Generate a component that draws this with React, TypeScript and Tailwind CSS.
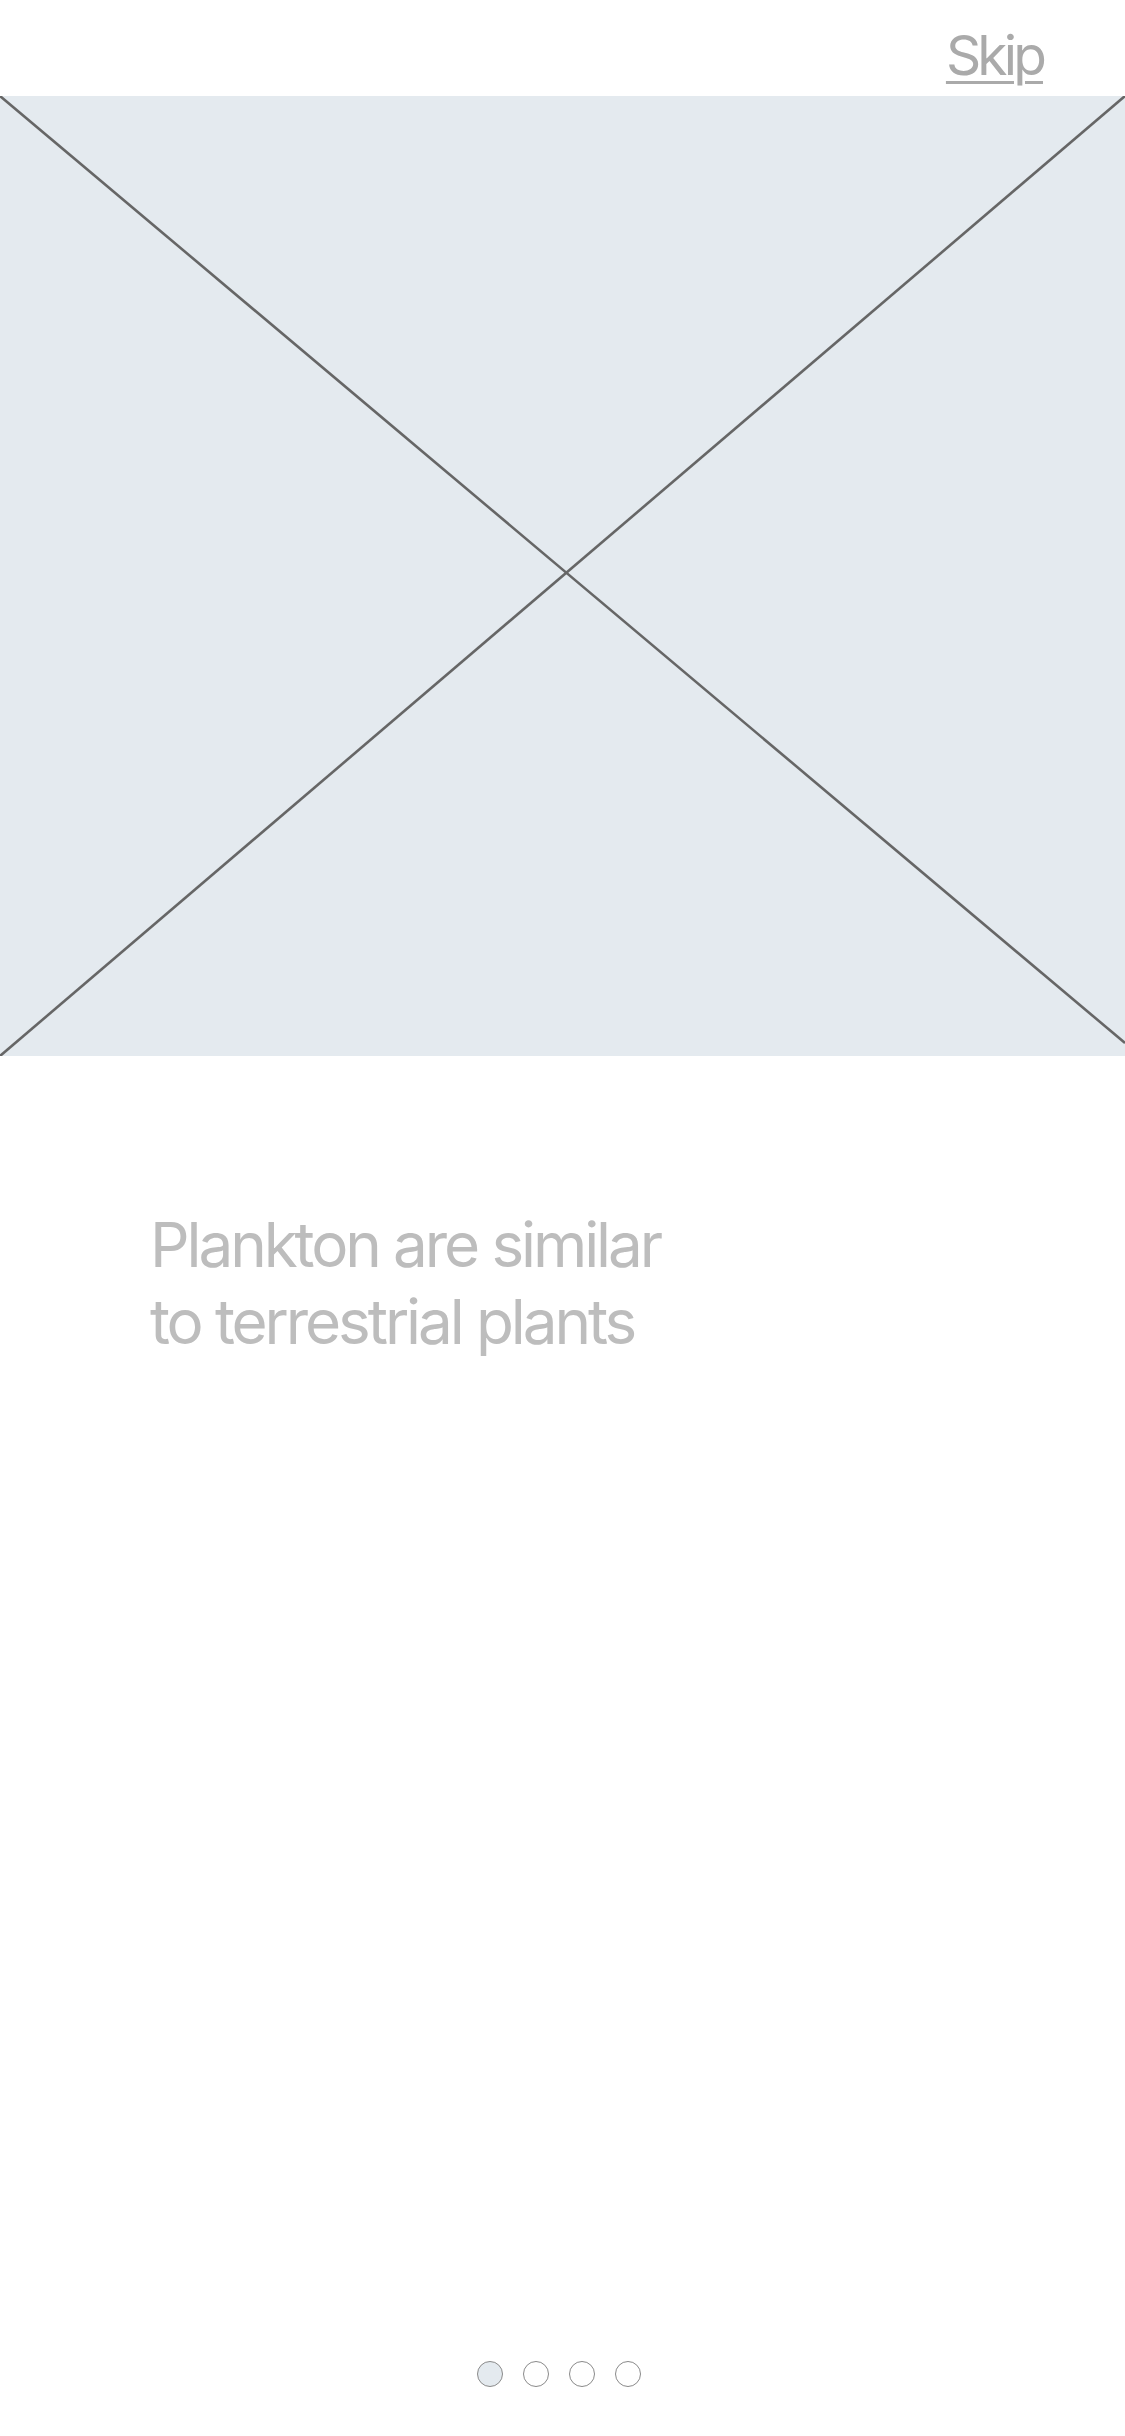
import React from 'react';

const dots = [true, false, false, false];

export default function App() {
  return (
    <div className="flex h-[2436px] w-[1125px] flex-col bg-white font-['Inter','Liberation_Sans',sans-serif]">
      {/* Header */}
      <div className="flex h-[96px] shrink-0 items-start justify-end pr-[82px] pt-[22px]">
        <a
          href="#"
          className="text-[55px] leading-[66px] tracking-[-0.07em] text-[#aaaaaa] underline decoration-[3px] underline-offset-[6px]"
        >
          Skip
        </a>
      </div>

      {/* Image placeholder */}
      <div className="relative h-[960px] shrink-0 bg-[#e4eaef]">
        <svg className="absolute inset-0 h-full w-full" viewBox="0 0 1125 960" preserveAspectRatio="none">
          <line x1="0" y1="0" x2="1125" y2="947" stroke="#666666" strokeWidth="2.6" />
          <line x1="1125" y1="0" x2="0" y2="960" stroke="#666666" strokeWidth="2.6" />
        </svg>
      </div>

      {/* Title */}
      <div className="mt-[150px] pl-[150px]">
        <h1 className="text-[62px] font-normal leading-[77px] tracking-[-0.05em] text-[#bdbdbd]">
          Plankton are similar
          <br />
          to terrestrial plants
        </h1>
      </div>

      <div className="flex-1" />

      {/* Pager */}
      <div className="flex justify-center gap-[20px] pb-[49px] pr-[7px]">
        {dots.map((active, i) => (
          <span
            key={i}
            className={`h-[26px] w-[26px] rounded-full border-[1.5px] border-[#8a8a8a] ${active ? 'bg-[#e4eaef]' : 'bg-white'}`}
          />
        ))}
      </div>
    </div>
  );
}
